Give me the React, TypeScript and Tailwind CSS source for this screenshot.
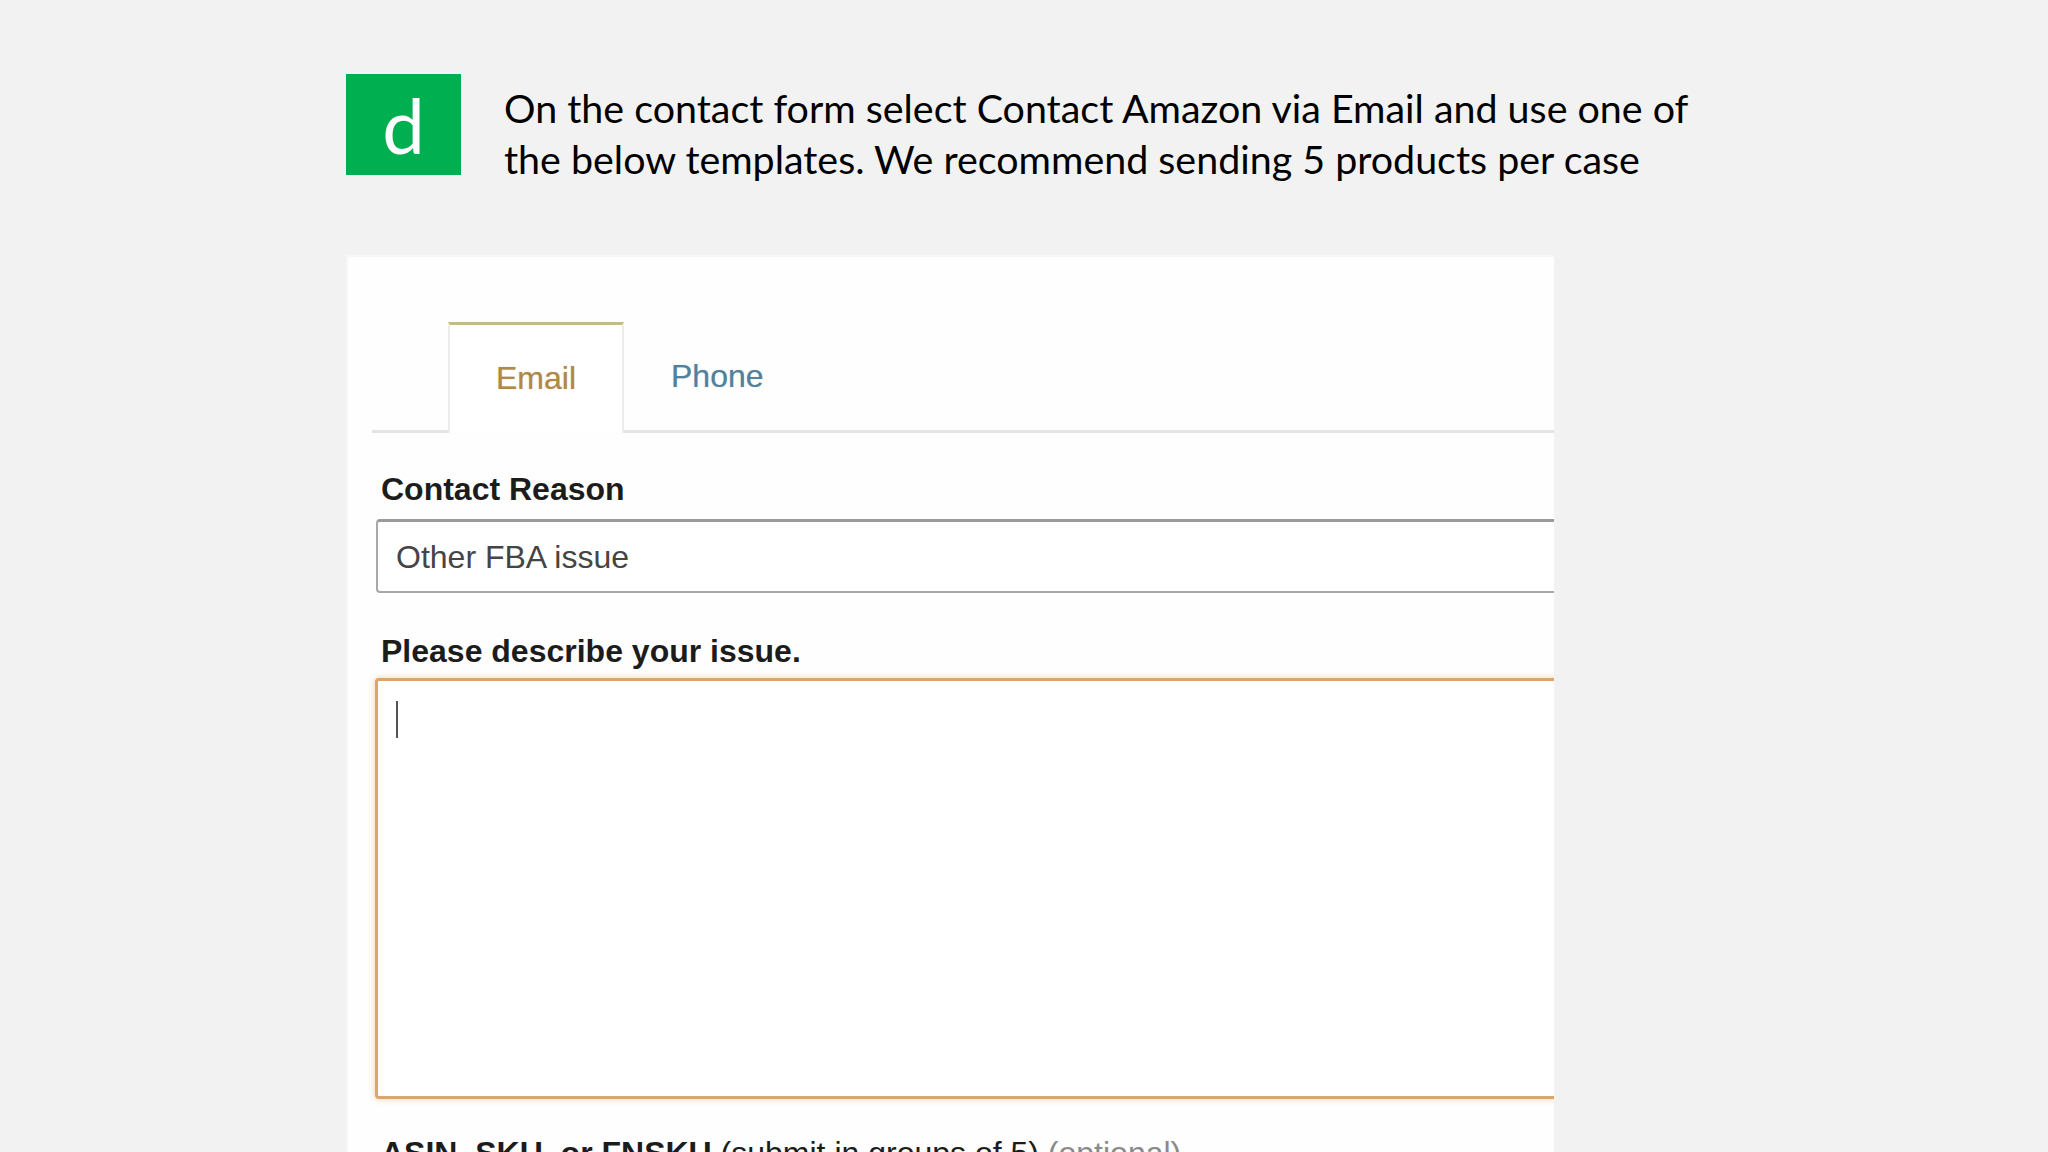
import React from "react";

const formFont = { fontFamily: '"Liberation Sans", Arial, sans-serif' };

export default function App() {
  return (
    <div className="h-[1152px] w-[2048px] overflow-hidden bg-[#f2f2f2]">
      <div className="pl-[346px] pt-[74px]">
        {/* step header */}
        <div className="flex items-start">
          <div
            className="flex h-[101px] w-[115px] items-center justify-center bg-[#00b050] text-[76px] leading-none text-white"
            style={{ fontFamily: 'Lato, "Open Sans", sans-serif' }}
          >
            d
          </div>
          <p
            className="ml-[43px] mt-[8px] whitespace-nowrap text-[39.4px] leading-[51px] text-black"
            style={{ fontFamily: 'Lato, "Open Sans", sans-serif' }}
          >
            On the contact form select Contact Amazon via Email and use one of
            <br />
            the below templates. We recommend sending 5 products per case
          </p>
        </div>

        {/* screenshot of the contact form */}
        <div
          className="mt-[71px] h-[906px] w-[1208px] overflow-hidden border-t-2 border-l-2 border-[#f7f7f7] bg-[#fefefe]"
          style={formFont}
        >
          <div className="ml-[24px] mt-[65px] flex border-b-[3px] border-[#e4e4e4]">
            <div className="w-[76px]" />
            <div className="-mb-[3px] flex h-[111px] w-[176px] items-center justify-center border-x-2 border-t-[3px] border-x-[#ececec] border-t-[#c2bb90] bg-white pb-[3px]">
              <span className="text-[32px] text-[#b08848] [text-shadow:0_0_1px_rgba(176,136,72,0.6)]">
                Email
              </span>
            </div>
            <div className="flex h-[108px] items-center pl-[47px]">
              <span className="text-[32px] text-[#53809c] [text-shadow:0_0_1px_rgba(83,128,156,0.5)]">
                Phone
              </span>
            </div>
          </div>

          <div className="ml-[33px] mt-[38px] text-[32px] font-bold leading-[37px] text-[#1c1c1c]">
            Contact Reason
          </div>
          <div className="ml-[28px] mt-[11px] flex h-[74px] w-[1300px] items-center rounded-[4px] border-2 border-t-[3px] border-[#a8a8a8] border-t-[#9a9a9a] bg-white pl-[18px] text-[32px] text-[#454545]">
            Other FBA issue
          </div>

          <div className="ml-[33px] mt-[40px] text-[32px] font-bold leading-[37px] text-[#1c1c1c]">
            Please describe your issue.
          </div>
          <div className="ml-[27px] mt-[8px] h-[421px] w-[1300px] rounded-[4px] border-[3px] border-[#dca56a] bg-white pl-[18px] pt-[20px] shadow-[0_0_6px_rgba(228,150,70,0.45)]">
            <div className="h-[37px] w-[2px] bg-[#555]" />
          </div>

          <div className="ml-[33px] mt-[36px] whitespace-nowrap text-[32px] leading-[37px] text-[#1c1c1c]">
            <span className="font-bold">ASIN, SKU, or FNSKU</span>
            <span> (submit in groups of 5)</span>
            <span className="text-[#8a8a8a]"> (optional)</span>
          </div>
        </div>
      </div>
    </div>
  );
}
